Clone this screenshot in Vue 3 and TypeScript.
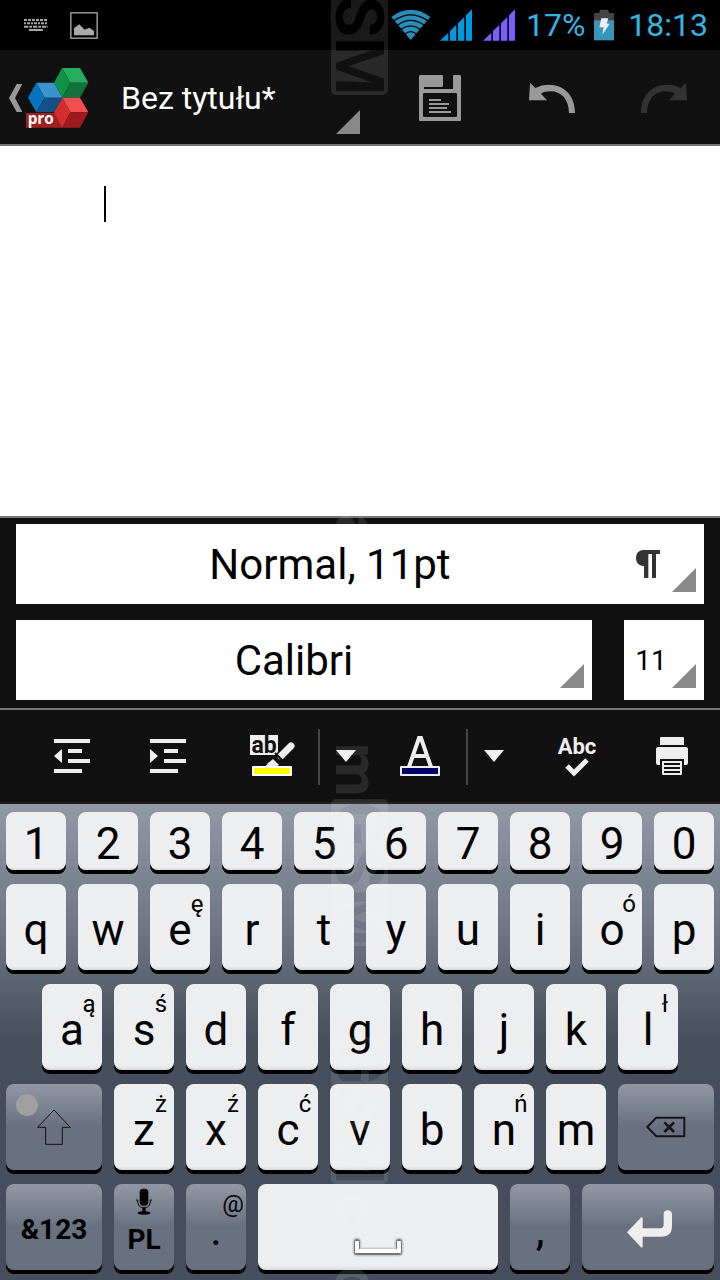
<script setup lang="ts">
import { ref } from 'vue'

interface Key {
  label: string
  hint?: string
}

const digits = ['1', '2', '3', '4', '5', '6', '7', '8', '9', '0']

const topRow: Key[] = [
  { label: 'q' },
  { label: 'w' },
  { label: 'e', hint: 'ę' },
  { label: 'r' },
  { label: 't' },
  { label: 'y' },
  { label: 'u' },
  { label: 'i' },
  { label: 'o', hint: 'ó' },
  { label: 'p' },
]

const homeRow: Key[] = [
  { label: 'a', hint: 'ą' },
  { label: 's', hint: 'ś' },
  { label: 'd' },
  { label: 'f' },
  { label: 'g' },
  { label: 'h' },
  { label: 'j' },
  { label: 'k' },
  { label: 'l', hint: 'ł' },
]

const bottomRow: Key[] = [
  { label: 'z', hint: 'ż' },
  { label: 'x', hint: 'ź' },
  { label: 'c', hint: 'ć' },
  { label: 'v' },
  { label: 'b' },
  { label: 'n', hint: 'ń' },
  { label: 'm' },
]

const body = ref('')
</script>

<template>
  <div class="screen">
    <div class="status">
      <svg class="st-keyboard" viewBox="72 54 72 42" aria-hidden="true">
        <g fill="none" stroke="#a6a6a6" stroke-width="6">
          <path d="M72 60H144" stroke-dasharray="9 3" />
          <path d="M72 70H144" stroke-dasharray="6 3 9 3" />
          <path d="M72 80H144" stroke-dasharray="13 3 8 3" />
          <path d="M87 90H129" />
        </g>
      </svg>
      <svg class="st-picture" viewBox="210 35 84 81" aria-hidden="true">
        <rect x="212.500" y="37.500" width="79" height="76" fill="none" stroke="#aaa" stroke-width="4" />
        <path d="M222 105V84L238 72L254 88L268 82L282 92V105Z" fill="#aaa" />
      </svg>
      <span class="grow"></span>
      <svg class="st-wifi" viewBox="92 22 120 96" aria-hidden="true">
        <path d="M151 115L93 46Q121 24 151 24Q182 24 210 46Z" fill="#2a8db8" />
        <g fill="none" stroke="#000" stroke-width="4">
          <path d="M101 57Q151 22 202 57" />
          <path d="M112 70Q151 42 191 70" />
          <path d="M122 83Q151 62 180 83" />
          <path d="M134 97Q151 83 168 97" />
        </g>
      </svg>
      <svg class="st-signal first" viewBox="240 22 96 96" aria-hidden="true">
        <path d="M240 117L265 93V117ZM270 88L289 69V117H270ZM294 65L313 46V117H294ZM318 41L336 23V117H318Z" fill="#0099e0" />
      </svg>
      <svg class="st-signal" viewBox="240 22 96 96" aria-hidden="true">
        <path d="M240 117L265 93V117ZM270 88L289 69V117H270ZM294 65L313 46V117H294ZM318 41L336 23V117H318Z" fill="#7a5cff" />
      </svg>
      <span class="st-text percent">17%</span>
      <svg class="st-battery" viewBox="702 26 60 96" aria-hidden="true">
        <path d="M702 38H718V34L721 28H744L747 34V38H762V62H702Z" fill="#444" />
        <path d="M702 60H762V120H702Z" fill="#3796bc" />
        <path d="M724 54H745L740 70H749L727 103L731 81H718Z" fill="#eee" />
      </svg>
      <span class="st-text clock">18:13</span>
    </div>

    <header class="header">
      <button class="home" type="button" aria-label="Wstecz">
        <svg class="chevron" viewBox="24 249 45 90" aria-hidden="true">
          <path d="M50 252H67L45 294L67 336H50L27 294Z" fill="#999" />
        </svg>
        <svg class="logo" viewBox="72 198 198 192" aria-hidden="true">
          <path d="M186 204H240L265 248H211Z" fill="#25ae60" />
          <path d="M186 204L211 248L187 293L162 248Z" fill="#109346" />
          <path d="M211 248H265L240 293H187Z" fill="#10733a" />
          <path d="M109 248H162L187 293H134Z" fill="#3b93ce" />
          <path d="M109 248L134 293L109 337L84 293Z" fill="#0674bf" />
          <path d="M134 293H187L162 337H109Z" fill="#145088" />
          <path d="M78 339H189V383H78Z" fill="#a31e21" />
          <path d="M187 293H240L265 337H211Z" fill="#f25050" />
          <path d="M187 293L211 337L187 383L162 337Z" fill="#d42f2f" />
          <path d="M211 337H265L240 383H187Z" fill="#9e1b1f" />
          <text x="83" y="373" class="logo-text">pro</text>
        </svg>
      </button>
      <button class="title" type="button">
        <span>Bez tytułu*</span>
        <svg class="corner" viewBox="0 0 24 24" aria-hidden="true"><path d="M0 24L24 0V24Z" fill="#888" /></svg>
      </button>
      <button class="action" type="button" aria-label="Zapisz">
        <svg viewBox="168 216 144 156" aria-hidden="true">
          <path fill-rule="evenodd" fill="#999" d="M181 225H245Q249 225 249 229V257Q249 261 245 261H192V267H279V229Q279 225 283 225H299Q303 225 303 229V359Q303 363 299 363H181Q177 363 177 359V229Q177 225 181 225ZM193 279Q189 279 189 283V347Q189 351 193 351H287Q291 351 291 347V283Q291 279 287 279Z" />
          <path d="M207 300H243M207 312H267M207 324H261M207 336H273" stroke="#999" stroke-width="6" fill="none" />
        </svg>
      </button>
      <button class="action" type="button" aria-label="Cofnij">
        <svg viewBox="504 216 144 156" aria-hidden="true">
          <path fill="#999" d="M510 248L526 264Q544 254 567 254C613 254 645 287 645 339H627C626 297 604 274 571 274Q553 274 543 281L561 301H507Z" />
        </svg>
      </button>
      <button class="action" type="button" aria-label="Ponów" disabled>
        <svg viewBox="840 216 144 156" aria-hidden="true">
          <path fill="#333" d="M978 248L962 264Q944 254 921 254C875 254 843 287 843 339H861C862 297 884 274 917 274Q935 274 945 281L927 301H981Z" />
        </svg>
      </button>
    </header>

    <main class="document">
      <span class="caret"></span>
      <textarea v-model="body" class="page" aria-label="Treść dokumentu"></textarea>
    </main>

    <section class="format">
      <div class="field style-field">
        <select aria-label="Styl akapitu">
          <option>Normal, 11pt</option>
        </select>
        <svg class="pilcrow" viewBox="0 0 72 84" aria-hidden="true">
          <path d="M72 0V12H60V84H48V12H37V84H24V48H22C8 48 0 37 0 24S8 0 22 0Z" fill="#333" />
        </svg>
        <svg class="corner" viewBox="0 0 24 24" aria-hidden="true"><path d="M0 24L24 0V24Z" fill="#888" /></svg>
      </div>
      <div class="format-row">
        <div class="field font-field">
          <select aria-label="Czcionka">
            <option>Calibri</option>
          </select>
          <svg class="corner" viewBox="0 0 24 24" aria-hidden="true"><path d="M0 24L24 0V24Z" fill="#888" /></svg>
        </div>
        <div class="field size-field">
          <select aria-label="Rozmiar czcionki">
            <option>11</option>
          </select>
          <svg class="corner" viewBox="0 0 24 24" aria-hidden="true"><path d="M0 24L24 0V24Z" fill="#888" /></svg>
        </div>
      </div>
    </section>

    <nav class="toolbar" aria-label="Formatowanie">
      <button class="tool" type="button" aria-label="Zmniejsz wcięcie">
        <svg viewBox="48 732 48 48" aria-hidden="true">
          <path fill="#eee" d="M54 739H90V743H54ZM68 749H82V753H68ZM68 759H90V763H68ZM54 769H82V773H54ZM62 749V763L54 756Z" />
        </svg>
      </button>
      <button class="tool" type="button" aria-label="Zwiększ wcięcie">
        <svg viewBox="144 732 48 48" aria-hidden="true">
          <path fill="#eee" d="M150 739H186V743H150ZM164 749H178V753H164ZM164 759H186V763H164ZM150 769H178V773H150ZM150 749L158 756L150 763Z" />
        </svg>
      </button>
      <div class="split">
        <button class="tool" type="button" aria-label="Kolor wyróżnienia">
          <svg viewBox="248 732 48 48" aria-hidden="true">
            <path fill="#eee" d="M250 735H278V755H250Z" />
            <text x="264" y="753" text-anchor="middle" class="ab-text">ab</text>
            <path d="M280 757L291 746" stroke="#111" stroke-width="10" stroke-linecap="round" />
            <path d="M281 756L291 746" stroke="#eee" stroke-width="7" stroke-linecap="round" />
            <path d="M275 753L284 762" stroke="#111" stroke-width="2" />
            <path fill="#eee" d="M273 759L279 765L276 767H265L268 763Z" />
            <rect x="252" y="766" width="40" height="10" rx="1" fill="#fff" />
            <rect x="254" y="768" width="36" height="6" fill="#ff0" />
          </svg>
        </button>
        <button class="drop" type="button" aria-label="Wybierz kolor wyróżnienia">
          <svg viewBox="0 0 20 12" aria-hidden="true"><path d="M0 0H20L10 12Z" fill="#eee" /></svg>
        </button>
      </div>
      <div class="split">
        <button class="tool" type="button" aria-label="Kolor tekstu">
          <svg viewBox="396 732 48 48" aria-hidden="true">
            <path d="M409 767L419 738H421L431 767M412 756H428" fill="none" stroke="#eee" stroke-width="4" />
            <rect x="400" y="766" width="40" height="10" rx="1" fill="#eee" />
            <rect x="402" y="768" width="36" height="6" fill="#000066" />
          </svg>
        </button>
        <button class="drop" type="button" aria-label="Wybierz kolor tekstu">
          <svg viewBox="0 0 20 12" aria-hidden="true"><path d="M0 0H20L10 12Z" fill="#eee" /></svg>
        </button>
      </div>
      <button class="tool spell" type="button" aria-label="Sprawdź pisownię">
        <svg viewBox="552 732 48 48" aria-hidden="true">
          <text x="577" y="754" text-anchor="middle" class="abc-text">Abc</text>
          <path d="M567 766L574 773L587 760" fill="none" stroke="#eee" stroke-width="5" />
        </svg>
      </button>
      <button class="tool" type="button" aria-label="Drukuj">
        <svg viewBox="648 732 48 48" aria-hidden="true">
          <path fill="#eee" d="M661 737H683Q684 737 684 738V745H660V738Q660 737 661 737ZM658 747H686Q688 747 688 749V763Q688 765 686 765H684V759H660V765H658Q656 765 656 763V749Q656 747 658 747Z" />
          <path fill-rule="evenodd" fill="#eee" d="M662 761H682V774Q682 775 681 775H663Q662 775 662 774ZM664 763V765H680V763ZM664 767V769H680V767ZM664 771V773H680V771Z" />
        </svg>
      </button>
    </nav>

    <section class="keyboard" aria-label="Klawiatura">
      <div class="row">
        <button v-for="d in digits" :key="d" class="key digit" type="button">{{ d }}</button>
      </div>
      <div class="row">
        <button v-for="k in topRow" :key="k.label" class="key" type="button">
          {{ k.label }}<span v-if="k.hint" class="hint">{{ k.hint }}</span>
        </button>
      </div>
      <div class="row home-row">
        <button v-for="k in homeRow" :key="k.label" class="key" type="button">
          {{ k.label }}<span v-if="k.hint" class="hint">{{ k.hint }}</span>
        </button>
      </div>
      <div class="row">
        <button class="key fn wide icon-key" type="button" aria-label="Shift">
          <span class="dot"></span>
          <svg class="shift-icon" viewBox="108 102 108 108" aria-hidden="true">
            <path d="M162 105L211 157H187V208H137V157H113Z" fill="none" stroke="#111" stroke-width="3" />
          </svg>
        </button>
        <button v-for="k in bottomRow" :key="k.label" class="key" type="button">
          {{ k.label }}<span v-if="k.hint" class="hint">{{ k.hint }}</span>
        </button>
        <button class="key fn wide icon-key" type="button" aria-label="Usuń">
          <svg class="delete-icon" viewBox="858 124 120 66" aria-hidden="true">
            <path d="M889 129H973V185H889L862 157Z" fill="none" stroke="#151515" stroke-width="6" stroke-linejoin="round" />
            <path d="M913 143L942 172M942 143L913 172" stroke="#151515" stroke-width="8" />
          </svg>
        </button>
      </div>
      <div class="row">
        <button class="key fn wide mode" type="button">&amp;123</button>
        <button class="key fn lang" type="button">
          <svg class="mic" viewBox="402 340 54 84" aria-hidden="true">
            <rect x="416" y="342" width="26" height="51" rx="11" fill="#000" />
            <path d="M405 376H410C410 394 417 399 429 399S448 394 448 376H453" fill="none" stroke="#000" stroke-width="3" />
            <path d="M424 399H434V410Q448 411 448 416Q446 420 429 420T410 416Q410 411 424 410Z" fill="#000" />
          </svg>
          <span>PL</span>
        </button>
        <button class="key fn" type="button">.<span class="hint">@</span></button>
        <button class="key space" type="button" aria-label="Spacja">
          <svg class="space-icon" viewBox="0 0 56 24" aria-hidden="true">
            <path d="M7 5V15H49V5" fill="none" stroke="#000" stroke-opacity="0.15" stroke-width="9" stroke-linejoin="round" stroke-linecap="round" />
            <path d="M7 5V15H49V5" fill="none" stroke="#777" stroke-width="6" stroke-linejoin="round" stroke-linecap="round" />
            <path d="M7 4V14H49V4" fill="none" stroke="#fff" stroke-width="4" />
          </svg>
        </button>
        <button class="key fn" type="button">,</button>
        <button class="key fn enter icon-key" type="button" aria-label="Enter">
          <svg class="enter-icon" viewBox="798 402 144 120" aria-hidden="true">
            <path d="M801 472L844 427Q848 426 848 431V460H900Q911 460 911 448V417Q911 406 923 406T936 417V452Q936 485 904 485H848V514Q848 519 843 517Z" fill="#eee" />
          </svg>
        </button>
      </div>
    </section>

    <svg class="stamp" viewBox="330 0 60 1280" aria-hidden="true">
      <mask id="stamp-mask" maskUnits="userSpaceOnUse" x="330" y="0" width="60" height="1280">
        <g fill="#fff">
          <rect x="331" y="-52" width="57" height="147" rx="5" />
          <rect x="331" y="799" width="57" height="147" rx="5" />
          <rect x="331" y="1037" width="57" height="147" rx="5" />
          <g class="small">
            <text transform="translate(336 514) rotate(90)">a</text>
            <text transform="translate(336 743) rotate(90)">m</text>
            <text transform="translate(336 1192) rotate(90)">c</text>
            <text transform="translate(336 1266) rotate(90)">o</text>
          </g>
        </g>
        <g fill="#000">
          <text transform="translate(336 -50) rotate(90)">GSM</text>
          <text transform="translate(336 801) rotate(90)">GSM</text>
          <text transform="translate(336 1039) rotate(90)">GSM</text>
        </g>
      </mask>
      <rect x="330" y="0" width="60" height="1280" fill="#fff" fill-opacity="0.1" mask="url(#stamp-mask)" />
    </svg>
  </div>
</template>

<style>
html,
body {
  margin: 0;
  background: #111;
}
</style>

<style scoped>
.screen {
  position: relative;
  display: flex;
  flex-direction: column;
  min-height: 100vh;
  overflow: hidden;
  background: #111;
  font-family: Roboto, "Liberation Sans", sans-serif;
}

svg {
  display: block;
  flex: none;
}

button {
  margin: 0;
  padding: 0;
  border: 0;
  background: none;
  color: inherit;
  font: inherit;
}

.grow {
  flex: 1;
}

/* Status bar */
.status {
  display: flex;
  align-items: center;
  height: 50px;
  padding: 0 12px 0 24px;
  background: #000;
  color: #33b5e5;
}

.st-keyboard {
  width: 24px;
  height: 14px;
}

.st-picture {
  width: 28px;
  height: 27px;
  margin-left: 22px;
}

.st-wifi {
  width: 40px;
  height: 32px;
}

.st-signal {
  width: 32px;
  height: 32px;
  margin-left: 11px;
}

.st-signal.first {
  margin-left: 9px;
}

.st-text {
  font-size: 32px;
  line-height: 50px;
}

.percent {
  margin-left: 11px;
}

.clock {
  margin-left: 14px;
}

.st-battery {
  width: 20px;
  height: 32px;
  margin-left: 9px;
}

/* Application header */
.header {
  display: flex;
  height: 94px;
  border-bottom: 2px solid #777;
  color: #fff;
}

.home {
  display: flex;
  align-items: center;
  padding: 2px 0 0 8px;
}

.chevron {
  width: 15px;
  height: 30px;
}

.logo {
  width: 66px;
  height: 64px;
  margin-left: 1px;
}

.logo-text {
  fill: #fff;
  font-family: "Open Sans", sans-serif;
  font-size: 46px;
  font-weight: 700;
}

.title {
  position: relative;
  flex: 1;
  min-width: 0;
  padding: 2px 0 0 31px;
  font-size: 32px;
  line-height: 48px;
  text-align: left;
}

.title .corner {
  right: 24px;
  bottom: 10px;
}

.corner {
  position: absolute;
  right: 8px;
  bottom: 12px;
  width: 24px;
  height: 24px;
  pointer-events: none;
}

.action {
  display: flex;
  flex: 0 0 112px;
  align-items: center;
  justify-content: center;
  padding-top: 2px;
}

.action svg {
  width: 48px;
  height: 52px;
}

/* Document */
.document {
  display: flex;
  flex: 1;
  min-height: 200px;
  box-sizing: border-box;
  padding: 40px 40px 0 104px;
  background: #fff;
}

.caret {
  flex: none;
  width: 2px;
  height: 36px;
  background: #000;
}

.page {
  flex: 1;
  min-width: 0;
  padding: 0;
  border: 0;
  outline: 0;
  resize: none;
  background: transparent;
  font: 30px/36px Roboto, sans-serif;
}

/* Paragraph and font selectors */
.format {
  display: flex;
  flex-direction: column;
  gap: 16px;
  padding: 6px 16px 8px;
  border-top: 2px solid #777;
  border-bottom: 2px solid #777;
}

.format-row {
  display: flex;
  gap: 32px;
}

.field {
  position: relative;
  height: 80px;
  background: #fff;
}

.field select {
  width: 100%;
  height: 100%;
  margin: 0;
  padding: 0;
  border: 0;
  border-radius: 0;
  outline: 0;
  appearance: none;
  background: transparent;
  color: #000;
  font-family: inherit;
  font-size: 42px;
  text-align: center;
  text-align-last: center;
}

.style-field select {
  padding-right: 60px;
}

.font-field {
  flex: 1;
}

.font-field select {
  padding-right: 20px;
}

.size-field {
  flex: 0 0 80px;
}

.size-field select {
  padding-right: 26px;
  font-size: 28px;
}

.pilcrow {
  position: absolute;
  top: 26px;
  right: 44px;
  width: 24px;
  height: 28px;
  pointer-events: none;
}

/* Formatting toolbar */
.toolbar {
  display: flex;
  height: 92px;
  padding-left: 24px;
  border-bottom: 2px solid #1e1e1e;
}

.tool {
  display: flex;
  flex: 96;
  align-items: center;
  justify-content: center;
}

.tool svg {
  width: 48px;
  height: 48px;
}

.split {
  display: flex;
  flex: 148;
}

.tool + .split,
.tool.spell {
  margin-left: 8px;
}

.drop {
  position: relative;
  display: flex;
  flex: 52;
  align-items: center;
  justify-content: center;
}

.drop::before {
  position: absolute;
  top: 19px;
  bottom: 17px;
  left: -2px;
  width: 2px;
  background: #444;
  content: "";
}

.drop svg {
  width: 20px;
  height: 12px;
}

.ab-text {
  fill: #111;
  font-family: Roboto, sans-serif;
  font-size: 23px;
  font-weight: 700;
}

.abc-text {
  fill: #eee;
  font-family: Roboto, sans-serif;
  font-size: 22px;
  font-weight: 700;
}

/* Keyboard */
.keyboard {
  display: flex;
  flex-direction: column;
  gap: 14px;
  padding: 8px 0 10px;
  background: linear-gradient(#9299a6 0, #6c7481 130px, #464e5d 240px, #464e5d 100%);
}

.row {
  display: grid;
  grid-template-columns: repeat(20, 1fr);
}

.key {
  position: relative;
  grid-column: span 2;
  box-sizing: border-box;
  height: 86px;
  margin: 0 6px;
  padding-top: 6px;
  border-radius: 8px;
  background: linear-gradient(#edeef0 0, #edeef0 95%, #d9dcde 100%);
  box-shadow: 0 4px 0 #000;
  color: #000;
  font-size: 44px;
  line-height: 80px;
  text-align: center;
}

.digit {
  height: 58px;
  line-height: 52px;
}

.home-row .key:first-child {
  grid-column: 2 / span 2;
}

.fn {
  background: linear-gradient(#9197a3 0, #697181 50%, #697181 100%);
}

.wide {
  grid-column: span 3;
}

.icon-key {
  padding-top: 0;
}

.hint {
  position: absolute;
  top: 4px;
  right: -5px;
  width: 36px;
  font-size: 24px;
  line-height: 32px;
  text-align: center;
}

.dot {
  position: absolute;
  top: 10px;
  left: 10px;
  width: 22px;
  height: 22px;
  border-radius: 50%;
  background: #a0a0a0;
}

.shift-icon {
  width: 36px;
  height: 36px;
  margin: 0 auto;
}

.delete-icon {
  width: 40px;
  height: 22px;
  margin: 0 auto;
}

.mode {
  font-size: 28px;
  font-weight: 700;
}

.lang {
  display: flex;
  flex-direction: column;
  align-items: center;
  padding-top: 4px;
  font-size: 28px;
  font-weight: 700;
  line-height: 48px;
}

.mic {
  width: 18px;
  height: 28px;
}

.space {
  grid-column: span 7;
}

.space-icon {
  width: 56px;
  height: 24px;
  margin: 38px auto 0;
}

.enter {
  grid-column: span 4;
  padding-top: 4px;
  padding-left: 4px;
}

.enter-icon {
  width: 48px;
  height: 40px;
  margin: 0 auto;
}

/* Vertical stamp laid over the whole screen */
.stamp {
  position: absolute;
  top: 0;
  left: calc(50% - 30px);
  width: 60px;
  height: 1280px;
  pointer-events: none;
}

.stamp text {
  font-family: Roboto, sans-serif;
  font-size: 67px;
  font-weight: 700;
}

.stamp .small text {
  font-size: 62px;
}
</style>
